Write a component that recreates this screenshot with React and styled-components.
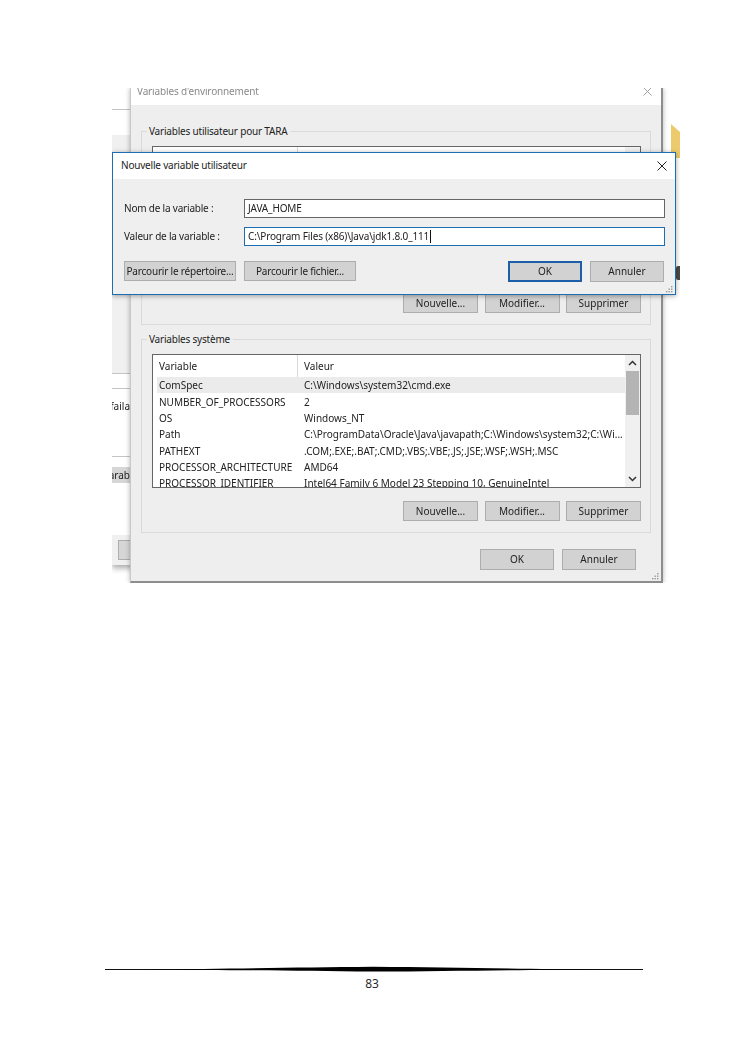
import styled, { createGlobalStyle } from "styled-components";

const GlobalStyle = createGlobalStyle`
  html, body {
    margin: 0;
    padding: 0;
    background: #ffffff;
  }
`;

const Page = styled.div`
  width: 745px;
  height: 1053px;
  padding-top: 88px;
  box-sizing: border-box;
  background: #ffffff;
  font-family: "Noto Sans", sans-serif;
  font-size: 10px;
  color: #222;
  overflow: hidden;
`;

// the pasted screenshot, windows sit on it like on a desktop
const Shot = styled.div`
  position: relative;
  width: 568px;
  height: 495px;
  margin-left: 112px;
  overflow: hidden;
  filter: blur(0.3px);
`;

const BackWindow = styled.div`
  position: absolute;
  left: 0;
  top: 0;
  width: 30px;
  height: 477px;
  display: flex;
  flex-direction: column;
  background: #ffffff;
  box-shadow: 0 3px 6px rgba(0, 0, 0, 0.35);
`;

const Strip = styled.div`
  height: ${(p) => p.$h}px;
  flex: none;
  box-sizing: border-box;
  background: ${(p) => p.$bg || "#ffffff"};
  border-bottom: ${(p) => (p.$line ? "1px solid #c4c4c4" : "none")};
`;

const ClippedText = styled.div`
  width: 18px;
  height: ${(p) => p.$h}px;
  display: flex;
  justify-content: flex-end;
  align-items: center;
  overflow: hidden;
  white-space: nowrap;
  background: ${(p) => p.$bg || "transparent"};
`;

const BackButton = styled.div`
  height: 18px;
  margin: 5px 0 0 6px;
  background: #d6d6d6;
  border: 1px solid #adadad;
`;

const FolderEdge = styled.svg`
  position: absolute;
  left: 559px;
  top: 36px;
`;

const BackSpot = styled.div`
  position: absolute;
  left: 564px;
  top: 178px;
  width: 4px;
  height: 14px;
  border-radius: 2px 0 0 2px;
  background: #4a4a4a;
`;

const MainWindow = styled.div`
  position: absolute;
  left: 18px;
  top: 0;
  width: 533px;
  height: 495px;
  box-sizing: border-box;
  display: flex;
  flex-direction: column;
  background: #eeeeee;
  border-right: 2px solid #8d8d8d;
  border-bottom: 2px solid #8d8d8d;
  border-left: 1px solid #c8c8c8;
  box-shadow: 0 0 5px rgba(0, 0, 0, 0.3);
`;

const MainTitle = styled.div`
  height: 17px;
  flex: none;
  box-sizing: border-box;
  display: flex;
  justify-content: space-between;
  align-items: center;
  padding: 0 9px 11px 6px;
  background: #ffffff;
  color: #8a8a8a;
  letter-spacing: -0.15px;
`;

const MainBody = styled.div`
  flex: 1;
  position: relative;
  padding: 26px 10px 0;
  display: flex;
  flex-direction: column;
  gap: 14px;
`;

const Group = styled.div`
  position: relative;
  height: 194px;
  box-sizing: border-box;
  padding: 14px 9px 0 10px;
  border: 1px solid #dadada;
`;

const GroupLabel = styled.span`
  position: absolute;
  left: 5px;
  top: -8px;
  padding: 0 3px 0 2px;
  background: #eeeeee;
  line-height: 14px;
  letter-spacing: -0.2px;
  white-space: nowrap;
`;

const ListBox = styled.div`
  height: 134px;
  box-sizing: border-box;
  display: flex;
  background: #ffffff;
  border: 1px solid #666666;
  overflow: hidden;
`;

const ListArea = styled.div`
  flex: 1;
  min-width: 0;
  padding-left: 4px;
`;

const HeadRow = styled.div`
  height: 22px;
  display: grid;
  grid-template-columns: 141px 1fr;
  align-items: center;
`;

const HeadCell = styled.div`
  height: 100%;
  display: flex;
  align-items: center;
  padding-left: ${(p) => p.$pad}px;
  border-right: ${(p) => (p.$divider ? "1px solid #d8d8d8" : "none")};
`;

const Row = styled.div`
  height: 16.35px;
  display: grid;
  grid-template-columns: 141px 1fr;
  align-items: center;
  background: ${(p) => (p.$selected ? "#ebebeb" : "transparent")};
`;

const Cell = styled.div`
  padding-left: ${(p) => p.$pad}px;
  white-space: nowrap;
  overflow: hidden;
`;

const ScrollBar = styled.div`
  width: 15px;
  flex: none;
  display: flex;
  flex-direction: column;
  background: #f0f0f0;
`;

const ScrollArrow = styled.div`
  height: 16px;
  flex: none;
  display: flex;
  align-items: center;
  justify-content: center;
`;

const ScrollThumb = styled.div`
  height: 44px;
  flex: none;
  background: #b4b4b4;
  margin: 0 1px;
`;

const ScrollTrack = styled.div`
  flex: 1;
`;

const ButtonRow = styled.div`
  display: flex;
  justify-content: ${(p) => p.$justify || "flex-end"};
  gap: ${(p) => p.$gap || 6.5}px;
  margin-top: ${(p) => p.$top || 0}px;
  padding-right: ${(p) => p.$right || 0}px;
`;

const Button = styled.div`
  width: ${(p) => p.$w || 75}px;
  height: ${(p) => p.$h || 20}px;
  box-sizing: border-box;
  display: flex;
  align-items: center;
  justify-content: center;
  padding-bottom: 1px;
  white-space: nowrap;
  letter-spacing: ${(p) => (p.$tight ? "-0.2px" : "0")};
  background: #d2d2d2;
  border: ${(p) =>
    p.$primary ? "2px solid #1c5fa8" : "1px solid #adadad"};
`;

const Grip = styled.svg`
  position: absolute;
  right: ${(p) => p.$right}px;
  bottom: ${(p) => p.$bottom}px;
`;

const Dialog = styled.div`
  position: absolute;
  left: 0;
  top: 64px;
  width: 564px;
  height: 143px;
  box-sizing: border-box;
  display: flex;
  flex-direction: column;
  background: #efefef;
  border: 1px solid #1c6db3;
  box-shadow: 0 1px 5px rgba(0, 0, 0, 0.35);
`;

const DialogTitle = styled.div`
  height: 26px;
  flex: none;
  display: flex;
  justify-content: space-between;
  align-items: center;
  padding: 0 8px;
  background: #ffffff;
`;

const DialogTitleText = styled.span`
  padding-bottom: 2px;
  letter-spacing: -0.2px;
`;

const DialogBody = styled.div`
  flex: 1;
  position: relative;
  padding: 20px 10px 0 11px;
`;

const FieldRow = styled.div`
  display: flex;
  align-items: center;
  margin-bottom: 9px;
`;

const FieldLabel = styled.div`
  width: 120px;
  flex: none;
  padding-bottom: 1px;
  letter-spacing: -0.2px;
  white-space: nowrap;
`;

const Field = styled.div`
  flex: 1;
  height: 19px;
  box-sizing: border-box;
  display: flex;
  align-items: center;
  padding: 0 0 1px 3px;
  background: #ffffff;
  letter-spacing: -0.15px;
  white-space: nowrap;
  border: 1px solid ${(p) => (p.$focused ? "#1c6db3" : "#666666")};
`;

const Caret = styled.span`
  width: 1px;
  height: 13px;
  margin-left: 1px;
  background: #111;
`;

const ButtonGroup = styled.div`
  display: flex;
  gap: 8px;
`;

const Footer = styled.div`
  margin: 383px 0 0 105px;
  width: 538px;
  display: flex;
  flex-direction: column;
  align-items: center;
`;

const Rule = styled.svg`
  display: block;
`;

const PageNumber = styled.div`
  margin-top: 4px;
  padding-right: 4px;
  font-family: "Open Sans", sans-serif;
  font-size: 12px;
  line-height: 16px;
  color: #222;
`;

const rows = [
  ["ComSpec", "C:\\Windows\\system32\\cmd.exe"],
  ["NUMBER_OF_PROCESSORS", "2"],
  ["OS", "Windows_NT"],
  ["Path", "C:\\ProgramData\\Oracle\\Java\\javapath;C:\\Windows\\system32;C:\\Wi..."],
  ["PATHEXT", ".COM;.EXE;.BAT;.CMD;.VBS;.VBE;.JS;.JSE;.WSF;.WSH;.MSC"],
  ["PROCESSOR_ARCHITECTURE", "AMD64"],
  ["PROCESSOR_IDENTIFIER", "Intel64 Family 6 Model 23 Stepping 10, GenuineIntel"],
];

function CloseIcon({ size, color }) {
  return (
    <svg width={size} height={size} viewBox="0 0 10 10">
      <path d="M0.5 0.5 L9.5 9.5 M9.5 0.5 L0.5 9.5" stroke={color} strokeWidth="1" fill="none" />
    </svg>
  );
}

function GripDots({ right, bottom }) {
  return (
    <Grip $right={right} $bottom={bottom} width="7" height="7" viewBox="0 0 7 7" fill="#9a9a9a">
      <rect x="5" y="0" width="1.4" height="1.4" />
      <rect x="2.5" y="2.5" width="1.4" height="1.4" />
      <rect x="5" y="2.5" width="1.4" height="1.4" />
      <rect x="0" y="5" width="1.4" height="1.4" />
      <rect x="2.5" y="5" width="1.4" height="1.4" />
      <rect x="5" y="5" width="1.4" height="1.4" />
    </Grip>
  );
}

function Arrow({ down }) {
  return (
    <svg width="9" height="6" viewBox="0 0 9 6">
      <path
        d={down ? "M1 1 L4.5 4.5 L8 1" : "M1 5 L4.5 1.5 L8 5"}
        stroke="#333"
        strokeWidth="1.5"
        fill="none"
      />
    </svg>
  );
}

function VariableList({ heads, items }) {
  return (
    <ListBox>
      <ListArea>
        <HeadRow>
          <HeadCell $pad={2} $divider>{heads[0]}</HeadCell>
          <HeadCell $pad={6}>{heads[1]}</HeadCell>
        </HeadRow>
        {items.map(([name, value], i) => (
          <Row key={name} $selected={i === 0}>
            <Cell $pad={2}>{name}</Cell>
            <Cell $pad={6}>{value}</Cell>
          </Row>
        ))}
      </ListArea>
      <ScrollBar>
        <ScrollArrow><Arrow /></ScrollArrow>
        <ScrollThumb />
        <ScrollTrack />
        <ScrollArrow><Arrow down /></ScrollArrow>
      </ScrollBar>
    </ListBox>
  );
}

function VariableGroup({ title, heads, items }) {
  return (
    <Group>
      <GroupLabel>{title}</GroupLabel>
      <VariableList heads={heads} items={items} />
      <ButtonRow $top={13}>
        <Button>Nouvelle...</Button>
        <Button>Modifier...</Button>
        <Button>Supprimer</Button>
      </ButtonRow>
    </Group>
  );
}

export default function App() {
  return (
    <Page>
      <GlobalStyle />
      <Shot>
        <BackWindow>
          <Strip $h={22} $line />
          <Strip $h={25} />
          <Strip $h={239} $bg="#f0f0f0" $line />
          <Strip $h={15} $line />
          <ClippedText $h={34}>éfaila</ClippedText>
          <Strip $h={34} $line />
          <Strip $h={10} />
          <ClippedText $h={16} $bg="#d6d6d6">arab</ClippedText>
          <Strip $h={52} />
          <Strip $h={30} $bg="#f0f0f0">
            <BackButton />
          </Strip>
        </BackWindow>

        <FolderEdge width="9" height="34" viewBox="0 0 9 34">
          <path d="M0 0 L9 8 V34 H0 Z" fill="#eccb6c" />
        </FolderEdge>
        <BackSpot />

        <MainWindow>
          <MainTitle>
            <span>Variables d'environnement</span>
            <CloseIcon size={9} color="#9a9a9a" />
          </MainTitle>
          <MainBody>
            <VariableGroup title="Variables utilisateur pour TARA" heads={["", ""]} items={[]} />
            <VariableGroup title="Variables système" heads={["Variable", "Valeur"]} items={rows} />
            <ButtonRow $gap={8} $right={15} $top={2}>
              <Button $w={74} $h={21}>OK</Button>
              <Button $w={74} $h={21}>Annuler</Button>
            </ButtonRow>
            <GripDots right={2} bottom={1} />
          </MainBody>
        </MainWindow>

        <Dialog>
          <DialogTitle>
            <DialogTitleText>Nouvelle variable utilisateur</DialogTitleText>
            <CloseIcon size={10} color="#222" />
          </DialogTitle>
          <DialogBody>
            <FieldRow>
              <FieldLabel>Nom de la variable :</FieldLabel>
              <Field>JAVA_HOME</Field>
            </FieldRow>
            <FieldRow>
              <FieldLabel>Valeur de la variable :</FieldLabel>
              <Field $focused>
                C:\Program Files (x86)\Java\jdk1.8.0_111
                <Caret />
              </Field>
            </FieldRow>
            <ButtonRow $justify="space-between" $top={15} $right={1}>
              <ButtonGroup>
                <Button $w={112} $tight>Parcourir le répertoire...</Button>
                <Button $w={112} $tight>Parcourir le fichier...</Button>
              </ButtonGroup>
              <ButtonGroup>
                <Button $w={74} $h={21} $primary>OK</Button>
                <Button $w={74} $h={21}>Annuler</Button>
              </ButtonGroup>
            </ButtonRow>
            <GripDots right={2} bottom={1} />
          </DialogBody>
        </Dialog>
      </Shot>

      <Footer>
        <Rule width="538" height="6" viewBox="0 0 538 6">
          <rect x="0" y="3" width="538" height="1" fill="#111" />
          <path d="M40 3.4 C130 3 190 1.4 268 0.8 C346 1.4 410 3 498 3.4 C410 3.8 346 5 268 5.6 C190 5 130 3.8 40 3.4 Z" fill="#000" />
        </Rule>
        <PageNumber>83</PageNumber>
      </Footer>
    </Page>
  );
}
